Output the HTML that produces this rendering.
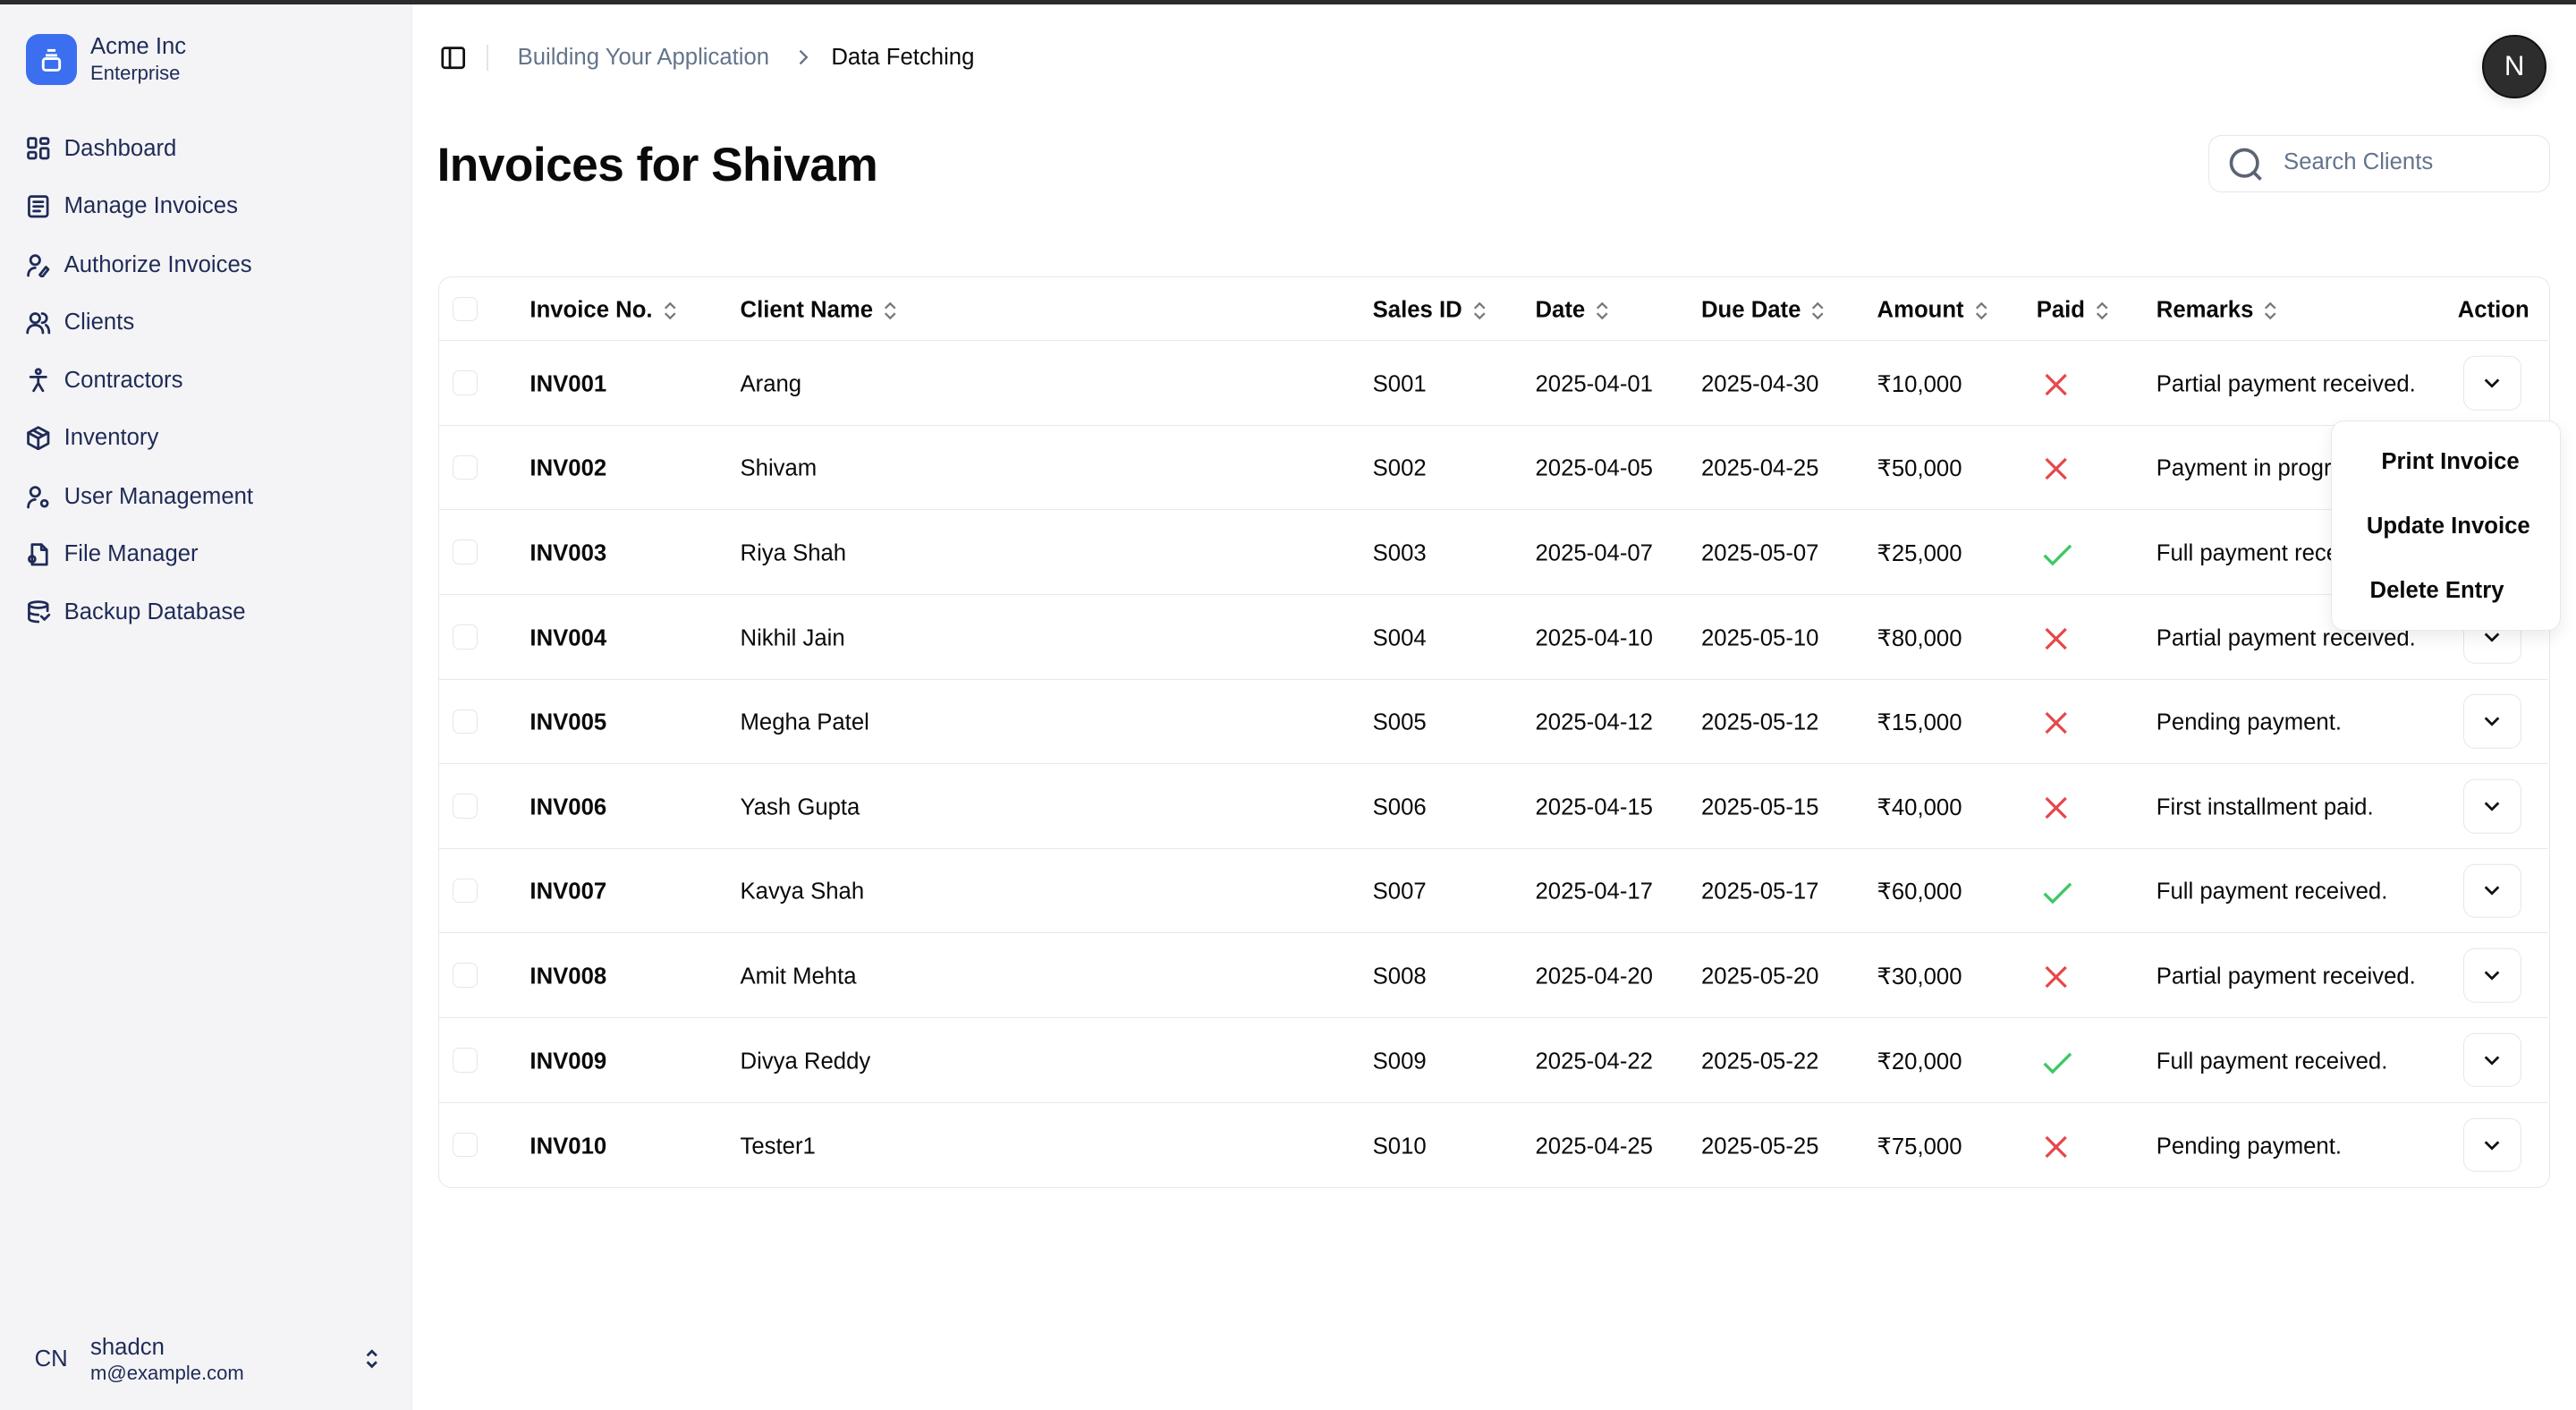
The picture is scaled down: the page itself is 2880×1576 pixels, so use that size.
<!DOCTYPE html>
<html><head><meta charset="utf-8"><style>
*{box-sizing:border-box;margin:0;padding:0}
html,body{width:2880px;height:1576px;overflow:hidden;background:#fff}
#r{zoom:1.83673;width:1568px;height:858px;position:relative;font-family:"Liberation Sans",sans-serif;color:#0a0a0a;font-size:14px}
.top{position:absolute;left:0;top:0;width:1568px;height:2.5px;background:#2b2b2e}
.side{position:absolute;left:0;top:2.5px;width:251px;height:856px;background:#f4f4f6;border-right:1px solid #ececef}
.logo{position:absolute;left:16px;top:18px;width:31px;height:31px;border-radius:8px;background:#3c6ff0}
.nav{position:absolute;left:16px;color:#1f2b57;font-size:14px;display:flex;align-items:center;height:20px}
.nav svg{width:15px;height:15px;margin-right:8px;fill:none;stroke:#1f2b57;stroke-width:1.6;stroke-linecap:round;stroke-linejoin:round}
.abs{position:absolute;white-space:nowrap}
.tbl{position:absolute;left:267px;top:168px;width:1285px;height:555px;border:1px solid #e8e8ec;border-radius:8px}
.row{position:absolute;left:0;width:1283px;border-bottom:1px solid #e8e8ec}
.cb{position:absolute;left:8px;width:15px;height:15px;border:1px solid #e6e6ea;border-radius:4px}
.c{position:absolute;top:calc(50% + 1px);transform:translateY(-50%);white-space:nowrap}
.h{font-weight:bold}
.sort{display:inline-block;margin-left:6px;vertical-align:middle}
.btn{position:absolute;left:1232px;width:35px;height:33px;border:1px solid #e6e6ea;border-radius:7px;top:50%;transform:translateY(-50%);display:flex;align-items:center;justify-content:center}
</style></head><body><div id="r">
<div class="top"></div>
<div class="side">
<div class="logo"><svg width="31" height="31" viewBox="0 0 31 31" fill="none" stroke="#fff" stroke-width="1.6"><line x1="13" y1="10" x2="18" y2="10"/><line x1="12" y1="13" x2="19" y2="13"/><rect x="10.5" y="15" width="10" height="7" rx="1.5"/></svg></div>
<div class="abs" style="left:55px;top:18px;font-size:14px;color:#1f2b57">Acme Inc</div>
<div class="abs" style="left:55px;top:35px;font-size:12px;color:#1f2b57">Enterprise</div>
<div class="nav" style="top:78px"><svg viewBox="0 0 16 16"><rect x="1.5" y="1.5" width="5" height="6" rx="1"/><rect x="9.5" y="1.5" width="5" height="3.5" rx="1"/><rect x="9.5" y="8" width="5" height="6.5" rx="1"/><rect x="1.5" y="10.5" width="5" height="4" rx="1"/></svg>Dashboard</div>
<div class="nav" style="top:113px"><svg viewBox="0 0 16 16"><rect x="2" y="1.5" width="12" height="13" rx="1.5"/><line x1="5" y1="5" x2="11" y2="5"/><line x1="5" y1="8" x2="11" y2="8"/><line x1="5" y1="11" x2="9" y2="11"/></svg>Manage Invoices</div>
<div class="nav" style="top:149px"><svg viewBox="0 0 16 16"><circle cx="6" cy="4.5" r="3"/><path d="M1.5 14.5c0-3 2-5 4.5-5"/><path d="M9 14l4-5 1.5 1.5-4 5z"/></svg>Authorize Invoices</div>
<div class="nav" style="top:184px"><svg viewBox="0 0 16 16"><circle cx="6" cy="5" r="3"/><path d="M1 14.5c0-3 2-5 5-5s5 2 5 5"/><path d="M10.5 2a3 3 0 010 6M13 9.5c1.5 1 2 3 2 5"/></svg>Clients</div>
<div class="nav" style="top:219px"><svg viewBox="0 0 16 16"><circle cx="8" cy="2.5" r="1.5"/><path d="M3 6h10M8 6v4l-3 5M8 10l3 5"/></svg>Contractors</div>
<div class="nav" style="top:254px"><svg viewBox="0 0 16 16"><path d="M8 1l6.5 3.5v7L8 15l-6.5-3.5v-7z"/><path d="M1.5 4.5L8 8l6.5-3.5M8 8v7M4.5 2.8l6.5 3.5"/></svg>Inventory</div>
<div class="nav" style="top:290px"><svg viewBox="0 0 16 16"><circle cx="6" cy="4.5" r="3"/><path d="M1.5 14.5c0-3 2-5 4.5-5"/><circle cx="12" cy="12" r="2"/></svg>User Management</div>
<div class="nav" style="top:325px"><svg viewBox="0 0 16 16"><path d="M4 1.5h6l3.5 3.5v9.5H4z"/><path d="M10 1.5V5h3.5"/><circle cx="4" cy="11" r="2"/></svg>File Manager</div>
<div class="nav" style="top:360px"><svg viewBox="0 0 16 16"><ellipse cx="8" cy="3.5" rx="6" ry="2"/><path d="M2 3.5v9c0 1.1 2.7 2 6 2M14 3.5v4M2 8c0 1.1 2.7 2 6 2"/><path d="M10 11l2 2 3-3"/></svg>Backup Database</div>
<div class="abs" style="left:21px;top:817px;font-size:14px;color:#1f2b57">CN</div>
<div class="abs" style="left:55px;top:810px;font-size:14px;color:#1f2b57">shadcn</div>
<div class="abs" style="left:55px;top:826px;font-size:12px;color:#1f2b57">m@example.com</div>
<svg class="abs" style="left:219px;top:817px" width="15" height="15" viewBox="0 0 16 16" fill="none" stroke="#1f2b57" stroke-width="1.6"><path d="M5 6l3-3 3 3M5 10l3 3 3-3"/></svg>
</div>
<svg class="abs" style="left:268px;top:27px" width="16" height="16" viewBox="0 0 16 16" fill="none" stroke="#111" stroke-width="1.5"><rect x="1.5" y="2" width="13" height="12" rx="1.5"/><line x1="6" y1="2" x2="6" y2="14"/></svg>
<div class="abs" style="left:296px;top:27px;width:1px;height:16px;background:#e4e4e7"></div>
<div class="abs" style="left:315px;top:27px;color:#64748b">Building Your Application</div>
<svg class="abs" style="left:484px;top:29px" width="10" height="12" viewBox="0 0 10 12" fill="none" stroke="#64748b" stroke-width="1.3"><path d="M3 2l4 4-4 4"/></svg>
<div class="abs" style="left:506px;top:27px;color:#0a0a0a">Data Fetching</div>
<div class="abs" style="left:1511px;top:21px;width:39px;height:39px;border-radius:50%;background:#2d2d2d;border:1.5px solid #111;box-shadow:0 2px 8px rgba(0,0,0,.1);color:#fff;font-size:17px;display:flex;align-items:center;justify-content:center">N</div>
<div class="abs" style="left:266px;top:84px;font-size:29px;font-weight:bold;letter-spacing:-0.3px">Invoices for Shivam</div>
<div class="abs" style="left:1344px;top:82px;width:208px;height:35px;border:1px solid #e6e6ea;border-radius:8px"></div>
<svg class="abs" style="left:1355px;top:88px" width="24" height="24" viewBox="0 0 24 24" fill="none" stroke="#5b6474" stroke-width="2"><circle cx="11" cy="11" r="8"/><path d="M17 17l4 4"/></svg>
<div class="abs" style="left:1390px;top:91px;color:#64748b">Search Clients</div>
<div class="tbl" id="t"></div>
<div class="abs" style="left:1419px;top:256px;width:140px;height:128px;background:#fff;border:1px solid #e8e8ec;border-radius:8px;box-shadow:0 4px 10px rgba(0,0,0,.08);font-weight:bold;z-index:5">
<div class="abs" style="left:30px;top:17px">Print Invoice</div>
<div class="abs" style="left:21px;top:56px">Update Invoice</div>
<div class="abs" style="left:23px;top:95px">Delete Entry</div>
</div>
</div>
<script>
const S='<svg class="sort" width="9" height="13" viewBox="0 0 9 13" fill="none" stroke="#777" stroke-width="1.2"><path d="M1.5 5l3-3 3 3M1.5 8l3 3 3-3"/></svg>';
const X='<svg width="16" height="16" viewBox="0 0 16 16" stroke="#e5484d" stroke-width="1.8"><path d="M2 2l12 12M14 2L2 14"/></svg>';
const V='<svg width="20" height="16" viewBox="0 0 20 16" fill="none" stroke="#3cc864" stroke-width="1.8"><path d="M2 9l5 5L18 3"/></svg>';
const cols=[55,183,568,667,768,875,972,1045];
const d=[["INV001","Arang","S001","2025-04-01","2025-04-30","₹10,000",0,"Partial payment received."],
["INV002","Shivam","S002","2025-04-05","2025-04-25","₹50,000",0,"Payment in progress."],
["INV003","Riya Shah","S003","2025-04-07","2025-05-07","₹25,000",1,"Full payment received."],
["INV004","Nikhil Jain","S004","2025-04-10","2025-05-10","₹80,000",0,"Partial payment received."],
["INV005","Megha Patel","S005","2025-04-12","2025-05-12","₹15,000",0,"Pending payment."],
["INV006","Yash Gupta","S006","2025-04-15","2025-05-15","₹40,000",0,"First installment paid."],
["INV007","Kavya Shah","S007","2025-04-17","2025-05-17","₹60,000",1,"Full payment received."],
["INV008","Amit Mehta","S008","2025-04-20","2025-05-20","₹30,000",0,"Partial payment received."],
["INV009","Divya Reddy","S009","2025-04-22","2025-05-22","₹20,000",1,"Full payment received."],
["INV010","Tester1","S010","2025-04-25","2025-05-25","₹75,000",0,"Pending payment."]];
let h='<div class="row" style="top:0;height:39px"><div class="cb" style="top:12px"></div>';
["Invoice No.","Client Name","Sales ID","Date","Due Date","Amount","Paid","Remarks"].forEach((t,i)=>h+=`<div class="c h" style="left:${cols[i]}px">${t}${S}</div>`);
h+='<div class="c h" style="right:11px">Action</div></div>';
d.forEach((r,k)=>{const top=39+k*51.5;
h+=`<div class="row" style="top:${top}px;height:51.5px;${k==9?'border-bottom:none':''}"><div class="cb" style="top:18px"></div>`;
r.forEach((v,i)=>{let c=v;if(i==6)c=v?V:X;h+=`<div class="c" style="left:${cols[i]+(i==6?(v?3:4):0)}px;${i==0?'font-weight:bold;':''}${i==6?'line-height:0':''}">${c}</div>`;});
h+='<div class="btn"><svg width="12" height="8" viewBox="0 0 12 8" fill="none" stroke="#111" stroke-width="1.5"><path d="M2 2l4 4 4-4"/></svg></div></div>';});
document.getElementById('t').innerHTML=h;
</script>
</body></html>
